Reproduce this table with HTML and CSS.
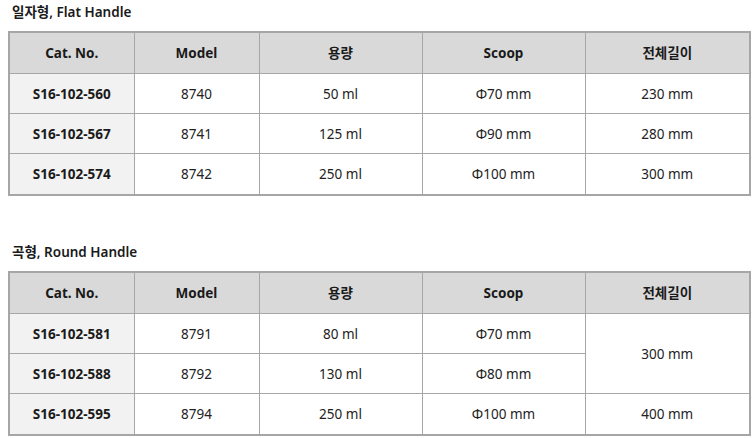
FILE: index.html
```html
<!DOCTYPE html>
<html lang="ko">
<head>
<meta charset="utf-8">
<link rel="stylesheet" href="styles.css">
</head>
<body>
<section class="block">
  <h3 class="title">일자형, Flat Handle</h3>
  <table class="spec">
    <colgroup>
      <col class="c1"><col class="c2"><col class="c3"><col class="c4"><col class="c5">
    </colgroup>
    <thead>
      <tr><th>Cat. No.</th><th>Model</th><th>용량</th><th>Scoop</th><th>전체길이</th></tr>
    </thead>
    <tbody>
      <tr><td class="cat">S16-102-560</td><td>8740</td><td>50 ml</td><td>Φ70 mm</td><td>230 mm</td></tr>
      <tr><td class="cat">S16-102-567</td><td>8741</td><td>125 ml</td><td>Φ90 mm</td><td>280 mm</td></tr>
      <tr><td class="cat">S16-102-574</td><td>8742</td><td>250 ml</td><td>Φ100 mm</td><td>300 mm</td></tr>
    </tbody>
  </table>
</section>
<section class="block second">
  <h3 class="title">곡형, Round Handle</h3>
  <table class="spec">
    <colgroup>
      <col class="c1"><col class="c2"><col class="c3"><col class="c4"><col class="c5">
    </colgroup>
    <thead>
      <tr><th>Cat. No.</th><th>Model</th><th>용량</th><th>Scoop</th><th>전체길이</th></tr>
    </thead>
    <tbody>
      <tr><td class="cat">S16-102-581</td><td>8791</td><td>80 ml</td><td>Φ70 mm</td><td rowspan="2">300 mm</td></tr>
      <tr><td class="cat">S16-102-588</td><td>8792</td><td>130 ml</td><td>Φ80 mm</td></tr>
      <tr><td class="cat">S16-102-595</td><td>8794</td><td>250 ml</td><td>Φ100 mm</td><td>400 mm</td></tr>
    </tbody>
  </table>
</section>
</body>
</html>
```
FILE: styles.css
```css
html, body {
  margin: 0;
  padding: 0;
  background: #ffffff;
}
body {
  padding: 0 8px;
  font-family: "Noto Sans", "Noto Sans CJK KR", sans-serif;
  font-size: 13.5px;
  color: #222222;
}
.block {
  display: flex;
  flex-direction: column;
}
.second {
  margin-top: 44px;
}
.title {
  margin: 0;
  padding: 3px 0 0 4px;
  height: 31px;
  box-sizing: border-box;
  font-size: 13.5px;
  font-weight: 600;
  line-height: 18px;
  color: #1a1a1a;
}
.spec {
  width: 741px;
  border-collapse: collapse;
  border: 2px solid #a6a6a6;
  table-layout: fixed;
}
.c1 { width: 125px; }
.c2 { width: 125px; }
.c3 { width: 163px; }
.c4 { width: 163px; }
.c5 { width: 165px; }
.spec th,
.spec td {
  border: 1px solid #a6a6a6;
  height: 39px;
  padding: 0;
  text-align: center;
  vertical-align: middle;
  line-height: 18px;
}
.spec th {
  height: 40px;
  background: #d9d9d9;
  font-weight: 700;
  color: #1a1a1a;
}
.spec tbody tr:last-child td {
  height: 40px;
}
.spec td {
  font-weight: 400;
  color: #222222;
}
.spec td.cat {
  background: #f2f2f2;
  font-weight: 700;
  color: #1a1a1a;
}
```
